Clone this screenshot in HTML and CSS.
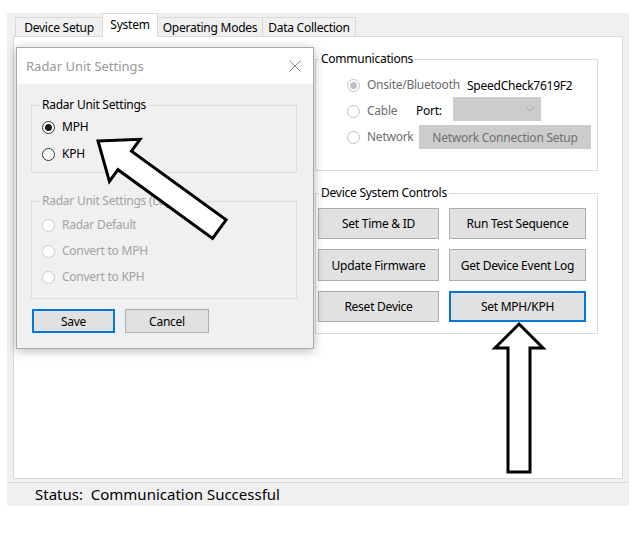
FILE: index.html
```html
<!DOCTYPE html>
<html>
<head>
<meta charset="utf-8">
<title>System</title>
<link rel="stylesheet" href="styles.css">
</head>
<body>
<div class="app">
  <div class="tabs">
    <div class="tab t1">Device Setup</div>
    <div class="tab sel t2">System</div>
    <div class="tab t3">Operating Modes</div>
    <div class="tab t4">Data Collection</div>
  </div>
  <div class="panel">
    <div class="col">
      <fieldset class="grp comms">
        <legend>Communications</legend>
        <div class="row">
          <span class="radio dis checked"></span>
          <span class="lbl dis w-onsite">Onsite/Bluetooth</span>
          <span class="dev">SpeedCheck7619F2</span>
        </div>
        <div class="row">
          <span class="radio dis"></span>
          <span class="lbl dis w-cable">Cable</span>
          <span class="lbl w-port">Port:</span>
          <span class="combo"><svg width="10" height="6" viewBox="0 0 10 6"><path d="M0.5 0.5 L5 5 L9.5 0.5" fill="none" stroke="#a6a6a6" stroke-width="1"/></svg></span>
        </div>
        <div class="row">
          <span class="radio dis"></span>
          <span class="lbl dis w-net">Network</span>
          <span class="netbtn">Network Connection Setup</span>
        </div>
      </fieldset>
      <fieldset class="grp dsc">
        <legend>Device System Controls</legend>
        <div class="btngrid">
          <button class="btn">Set Time &amp; ID</button>
          <button class="btn">Run Test Sequence</button>
          <button class="btn">Update Firmware</button>
          <button class="btn">Get Device Event Log</button>
          <button class="btn">Reset Device</button>
          <button class="btn focus">Set MPH/KPH</button>
        </div>
      </fieldset>
    </div>
  </div>
  <div class="status">Status:&nbsp; Communication Successful</div>
</div>

<div class="dialog">
  <div class="titlebar">
    <span class="title">Radar Unit Settings</span>
    <svg class="close" width="12" height="12" viewBox="0 0 12 12"><path d="M0.5 0.5 L11.5 11.5 M11.5 0.5 L0.5 11.5" stroke="#8a8a8a" stroke-width="1" fill="none"/></svg>
  </div>
  <div class="dbody">
    <fieldset class="dgrp g1">
      <legend>Radar Unit Settings</legend>
      <div class="drow"><span class="radio checked"></span><span class="lbl">MPH</span></div>
      <div class="drow"><span class="radio"></span><span class="lbl">KPH</span></div>
    </fieldset>
    <fieldset class="dgrp g2">
      <legend>Radar Unit Settings (Legacy)</legend>
      <div class="drow"><span class="radio dis2"></span><span class="lbl dis2">Radar Default</span></div>
      <div class="drow"><span class="radio dis2"></span><span class="lbl dis2">Convert to MPH</span></div>
      <div class="drow"><span class="radio dis2"></span><span class="lbl dis2">Convert to KPH</span></div>
    </fieldset>
    <div class="dbtns">
      <button class="btn focus save">Save</button>
      <button class="btn cancel">Cancel</button>
    </div>
  </div>
</div>

<svg class="arrows" width="642" height="534" viewBox="0 0 642 534">
  <polygon transform="translate(98 141) rotate(36)" points="0,0 33,-26 33,-11.5 150,-11.5 150,11.5 33,11.5 33,26" fill="#fff" stroke="#000" stroke-width="3" stroke-linejoin="miter"/>
  <polygon points="519,324 543,348 530,348 530,472 508,472 508,348 495,348" fill="#fff" stroke="#000" stroke-width="3" stroke-linejoin="miter"/>
</svg>
</body>
</html>
```

FILE: styles.css
```css
html, body {
  margin: 0;
  padding: 0;
  background: #ffffff;
}
body {
  width: 642px;
  height: 534px;
  position: relative;
  overflow: hidden;
  font-family: "Noto Sans", "Open Sans", "Liberation Sans", sans-serif;
  font-size: 12px;
  letter-spacing: -0.25px;
  color: #000;
}

.app {
  margin: 13px 0 0 7px;
  width: 622px;
  height: 493px;
  background: #f0f0f0;
  display: flex;
  flex-direction: column;
}

/* tabs */
.tabs {
  height: 24px;
  display: flex;
  align-items: flex-end;
  padding-left: 8px;
}
.tab {
  box-sizing: border-box;
  height: 20px;
  border: 1px solid #d9d9d9;
  border-bottom: none;
  background: #f0f0f0;
  display: flex;
  align-items: center;
  justify-content: center;
  line-height: 16px;
  padding-top: 1px;
}
.tab + .tab { margin-left: -1px; }
.t1 { width: 88px; }
.t2 { width: 56px; }
.t3 { width: 106px; }
.t4 { width: 94px; }
.tab.sel {
  height: 24px;
  background: #fff;
  position: relative;
  z-index: 2;
  padding-top: 0;
  padding-bottom: 2px;
}

/* panel */
.panel {
  box-sizing: border-box;
  margin: -1px 0 0 6px;
  width: 610px;
  height: 443px;
  background: #fff;
  border: 1px solid #d9d9d9;
  padding: 14px 0 0 301px;
}
.col {
  width: 283px;
  display: flex;
  flex-direction: column;
}

.grp, .dgrp {
  box-sizing: border-box;
  margin: 0;
  min-width: 0;
  border: 1px solid #dcdcdc;
}
.grp legend, .dgrp legend {
  margin-left: 3px;
  padding: 0 2px;
  line-height: 16px;
  font-size: 12px;
}
.dgrp legend {
  margin-left: 8px;
}
.comms {
  height: 120px;
  padding: 5px 0 0 0;
}
.row {
  height: 26px;
  padding-left: 31px;
  display: flex;
  align-items: center;
}
.radio {
  box-sizing: border-box;
  width: 13px;
  height: 13px;
  border: 1px solid #333;
  border-radius: 50%;
  background: #fff;
  display: flex;
  align-items: center;
  justify-content: center;
  flex: none;
  margin-right: 7px;
}
.radio.checked::after {
  content: "";
  width: 7px;
  height: 7px;
  border-radius: 50%;
  background: #1a1a1a;
}
.radio.dis { border-color: #c2c2c2; }
.radio.dis.checked::after { background: #c2c2c2; }
.radio.dis2 { border-color: #cccccc; }

.lbl { white-space: nowrap; line-height: 16px; }
.lbl.dis { color: #6d6d6d; }
.lbl.dis2 { color: #a3a3a3; }
.w-onsite { width: 100px; }
.w-cable { width: 49px; }
.w-port { width: 37px; }
.w-net { width: 52px; }
.dev { white-space: nowrap; }

.combo {
  box-sizing: border-box;
  width: 88px;
  height: 24px;
  margin-bottom: 4px;
  background: #cccccc;
  display: flex;
  align-items: center;
  justify-content: flex-end;
  padding-right: 6px;
}
.netbtn {
  box-sizing: border-box;
  width: 172px;
  height: 24px;
  background: #cccccc;
  color: #707070;
  display: flex;
  align-items: center;
  justify-content: center;
  white-space: nowrap;
}

.dsc {
  margin-top: 14px;
  height: 149px;
  padding: 7px 0 0 0;
}
.btngrid {
  margin-left: 2px;
  display: grid;
  grid-template-columns: 121px 137px;
  grid-template-rows: 31px 32px 31px;
  column-gap: 10px;
  row-gap: 10px;
}
.btn {
  box-sizing: border-box;
  margin: 0;
  padding: 0;
  font-family: inherit;
  font-size: 12px;
  letter-spacing: inherit;
  color: #000;
  background: #e1e1e1;
  border: 1px solid #adadad;
  white-space: nowrap;
}
.btn.focus {
  border: 2px solid #0078d7;
}

.status {
  margin-top: 3px;
  border-top: 1px solid #dadada;
  height: 22px;
  line-height: 22px;
  padding-left: 28px;
  font-size: 15px;
  letter-spacing: 0;
}

/* dialog */
.dialog {
  position: absolute;
  left: 16px;
  top: 47px;
  width: 298px;
  height: 302px;
  box-sizing: border-box;
  border: 1px solid #a9a9a9;
  background: #f0f0f0;
  box-shadow: 0 2px 10px rgba(0, 0, 0, 0.28);
  z-index: 5;
  display: flex;
  flex-direction: column;
}
.titlebar {
  height: 36px;
  background: #fff;
  display: flex;
  align-items: center;
  justify-content: space-between;
  padding: 0 12px 0 9px;
}
.title {
  color: #999999;
  font-size: 13px;
  letter-spacing: 0;
}
.dbody {
  padding: 13px 0 0 14px;
  display: flex;
  flex-direction: column;
}
.dgrp {
  width: 266px;
}
.g1 {
  height: 76px;
  padding: 3px 0 0 0;
  display: flex;
  flex-direction: column;
  gap: 5px;
}
.g2 {
  margin-top: 20px;
  height: 106px;
  padding: 5px 0 0 0;
  display: flex;
  flex-direction: column;
  gap: 4px;
}
.g2 legend { color: #a3a3a3; }
.drow {
  height: 22px;
  padding-left: 10px;
  display: flex;
  align-items: center;
}
.dbtns {
  margin-top: 10px;
  padding-left: 1px;
  display: flex;
  gap: 10px;
}
.save { width: 83px; height: 24px; }
.cancel { width: 84px; height: 24px; }

.arrows {
  position: absolute;
  left: 0;
  top: 0;
  z-index: 10;
  pointer-events: none;
}
```
